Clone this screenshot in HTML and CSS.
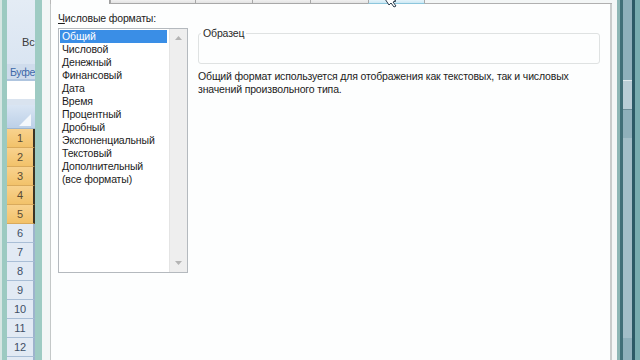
FILE: index.html
```html
<!DOCTYPE html>
<html lang="ru">
<head>
<meta charset="utf-8">
<title>Формат ячеек</title>
<link rel="stylesheet" href="styles.css">
</head>
<body>
<div class="screen">
  <div class="edge-l"></div>
  <div class="xl-col">
    <div class="ribbon"><span class="rb-btn">Вс</span></div>
    <div class="rb-group">Буфе</div>
    <div class="fbar"></div>
    <div class="fgap"></div>
    <div class="corner">
      <svg class="corner-tri" width="12" height="12" viewBox="0 0 12 12"><path d="M12 0 L12 12 L0 12 Z" fill="#f4f8fc"/></svg>
    </div>
    <div class="rh sel">1</div>
    <div class="rh sel">2</div>
    <div class="rh sel">3</div>
    <div class="rh sel">4</div>
    <div class="rh sel">5</div>
    <div class="rh">6</div>
    <div class="rh">7</div>
    <div class="rh">8</div>
    <div class="rh">9</div>
    <div class="rh">10</div>
    <div class="rh">11</div>
    <div class="rh">12</div>
    <div class="rh"></div>
  </div>
  <div class="frame-l"></div>
  <div class="dialog">
    <div class="tabs">
      <div class="tab active"></div>
      <div class="tab t2"></div>
      <div class="tab t3"></div>
      <div class="tab t4"></div>
      <div class="tab t5"></div>
      <div class="tab t6 hover"></div>
      <div class="tab-rest"></div>
    </div>
    <div class="panel">
      <div class="col-left">
        <div class="lbl"><span class="acc">Ч</span>исловые форматы:</div>
        <div class="listbox">
          <ul class="items">
            <li class="on">Общий</li>
            <li>Числовой</li>
            <li>Денежный</li>
            <li>Финансовый</li>
            <li>Дата</li>
            <li>Время</li>
            <li>Процентный</li>
            <li>Дробный</li>
            <li>Экспоненциальный</li>
            <li>Текстовый</li>
            <li>Дополнительный</li>
            <li>(все форматы)</li>
          </ul>
          <div class="vscroll">
            <svg class="arr" width="7" height="4" viewBox="0 0 7 4"><path d="M0 4 L3.5 0 L7 4 Z" fill="#b4b4b4"/></svg>
            <svg class="arr" width="7" height="4" viewBox="0 0 7 4"><path d="M0 0 L3.5 4 L7 0 Z" fill="#b4b4b4"/></svg>
          </div>
        </div>
      </div>
      <div class="col-right">
        <fieldset class="sample"><legend>Образец</legend><div class="sample-body"></div></fieldset>
        <p class="desc">Общий формат используется для отображения как текстовых, так и числовых<br>значений произвольного типа.</p>
      </div>
    </div>
    <svg class="cursor" width="14" height="9" viewBox="0 0 14 9"><path d="M1 0 L5 6 L7 4 L10 8 L12 7 L9 3 L12 2 L9 0 Z" fill="#ffffff" stroke="#2a3a4a" stroke-width="1"/></svg>
  </div>
  <div class="xl-right">
    <div class="xr-a"></div>
    <div class="xr-b"></div>
    <div class="xr-c"><div class="xr-btn"></div><div class="xr-thumb"></div></div>
    <div class="xr-d"></div>
    <div class="xr-e"></div>
  </div>
</div>
</body>
</html>
```

FILE: styles.css
```css
html, body {
  margin: 0;
  padding: 0;
  background: #fdfefe;
}
.screen {
  width: 640px;
  height: 360px;
  overflow: hidden;
  display: flex;
  font-family: "Liberation Sans", Arial, sans-serif;
  color: #1c1c1c;
}
.edge-l {
  width: 7px;
  flex: none;
  background: linear-gradient(to right, #d6e6e3 0, #d6e6e3 2px, #9ccac1 2px, #9ccac1 7px);
}
.xl-col {
  width: 28px;
  flex: none;
  display: flex;
  flex-direction: column;
  overflow: hidden;
  background: #dfe8f2;
}
.ribbon {
  height: 64px;
  flex: none;
  background: linear-gradient(#e4ecf5, #dae5f2);
  white-space: nowrap;
  font-size: 11px;
  color: #3a3a3a;
  padding: 36px 0 0 15px;
  box-sizing: border-box;
}
.rb-group {
  height: 17px;
  flex: none;
  background: #cfdcec;
  color: #3d68a8;
  font-size: 10.5px;
  letter-spacing: -0.3px;
  white-space: nowrap;
  padding: 2px 0 0 3px;
  box-sizing: border-box;
  border-bottom: 2px solid #afc5df;
}
.fbar {
  height: 18px;
  flex: none;
  background: #ffffff;
}
.fgap {
  height: 6px;
  flex: none;
  background: #d9e3ef;
}
.corner {
  height: 21px;
  flex: none;
  background: linear-gradient(#d9e5f3, #bcd0e8);
  border-bottom: 1px solid #9eb6ce;
  display: flex;
  justify-content: flex-end;
  align-items: flex-end;
  padding: 0 4px 2px 0;
}
.rh {
  height: 18px;
  flex: none;
  border-bottom: 1px solid #a9bed6;
  border-right: 2px solid #9db3cc;
  background: #e2eaf4;
  color: #3f4f66;
  font-size: 11px;
  line-height: 18px;
  text-align: center;
}
.rh.sel {
  background: linear-gradient(#f8d28e, #f2c26a);
  border-bottom-color: #d9aa5c;
  border-right-color: #3c3424;
  color: #5a4b33;
}
.frame-l {
  width: 7px;
  flex: none;
  background: #9ecbc3;
}
.dialog {
  width: 575px;
  flex: none;
  background: #f3f6f6;
  padding: 0 5px 0 8px;
  box-sizing: border-box;
  display: flex;
  flex-direction: column;
  position: relative;
}
.tabs {
  height: 4px;
  flex: none;
  display: flex;
}
.tab {
  flex: none;
  box-sizing: border-box;
  background: linear-gradient(#f0f0f0, #e3e3e3);
  border-left: 1px solid #a8a8a8;
  border-bottom: 1px solid #a8a8a8;
}
.tab.active {
  width: 60px;
  background: #fdfefe;
  border-left: 1px solid #b8b8b8;
  border-right: 1px solid #a0a0a0;
  border-bottom: none;
}
.t2 { width: 85px; }
.t3 { width: 57px; }
.t4 { width: 58px; }
.t5 { width: 58px; }
.t6 { width: 57px; border-right: 1px solid #a8a8a8; }
.tab.hover {
  background: linear-gradient(#e4f3fa, #cde9f4);
  border-bottom-color: #8cc6dc;
}
.tab-rest {
  flex: 1;
  border-bottom: 1px solid #b0b0b0;
}
.panel {
  flex: 1;
  background: #fdfefe;
  border-left: 1px solid #c4c8c8;
  border-right: 2px solid #c9cccc;
  display: flex;
  gap: 10px;
  padding: 7px 0 0 7px;
  font-size: 10.5px;
  letter-spacing: -0.15px;
}
.col-left {
  width: 130px;
  flex: none;
  display: flex;
  flex-direction: column;
}
.lbl {
  line-height: 14px;
  height: 14px;
  margin-bottom: 3px;
  white-space: nowrap;
}
.acc {
  text-decoration: underline;
}
.listbox {
  height: 245px;
  box-sizing: border-box;
  border: 1px solid #b4b9be;
  background: #ffffff;
  display: flex;
}
.items {
  list-style: none;
  margin: 0;
  padding: 1px 1px 0 1px;
  flex: 1;
}
.items li {
  line-height: 13px;
  height: 13px;
  padding-left: 2px;
  white-space: nowrap;
}
.items li.on {
  background: #3a8ee6;
  color: #ffffff;
  margin-right: 1px;
}
.vscroll {
  width: 17px;
  flex: none;
  background: #eeeeee;
  border-left: 1px solid #e4e4e4;
  display: flex;
  flex-direction: column;
  justify-content: space-between;
  align-items: center;
  padding: 7px 0 7px 0;
}
.col-right {
  width: 402px;
  flex: none;
  padding-top: 16px;
}
.sample {
  margin: 0;
  padding: 0;
  border: 1px solid #dfe2e2;
  border-radius: 3px;
  min-width: 0;
}
.sample legend {
  line-height: 12px;
  padding: 0 2px;
  margin-left: 2px;
  color: #2a2a2a;
}
.sample-body {
  height: 24px;
}
.desc {
  margin: 6px 0 0 0;
  line-height: 13px;
  white-space: nowrap;
}
.cursor {
  position: absolute;
  left: 342px;
  top: -1px;
}
.xl-right {
  flex: 1;
  display: flex;
}
.xr-a { width: 3px; background: #8db6b5; }
.xr-b { width: 3px; background: #416f78; }
.xr-c {
  width: 9px;
  background: #8fb0bb;
  display: flex;
  flex-direction: column;
  padding-top: 80px;
}
.xr-btn { height: 28px; background: #b9cdd6; border-top: 1px solid #e0eaee; border-bottom: 1px solid #6e8e99; }
.xr-thumb { height: 200px; margin-top: 28px; background: #a3bec8; }
.xr-d { width: 3px; background: #2c5a66; }
.xr-e { flex: 1; background: #78acaf; }
```
